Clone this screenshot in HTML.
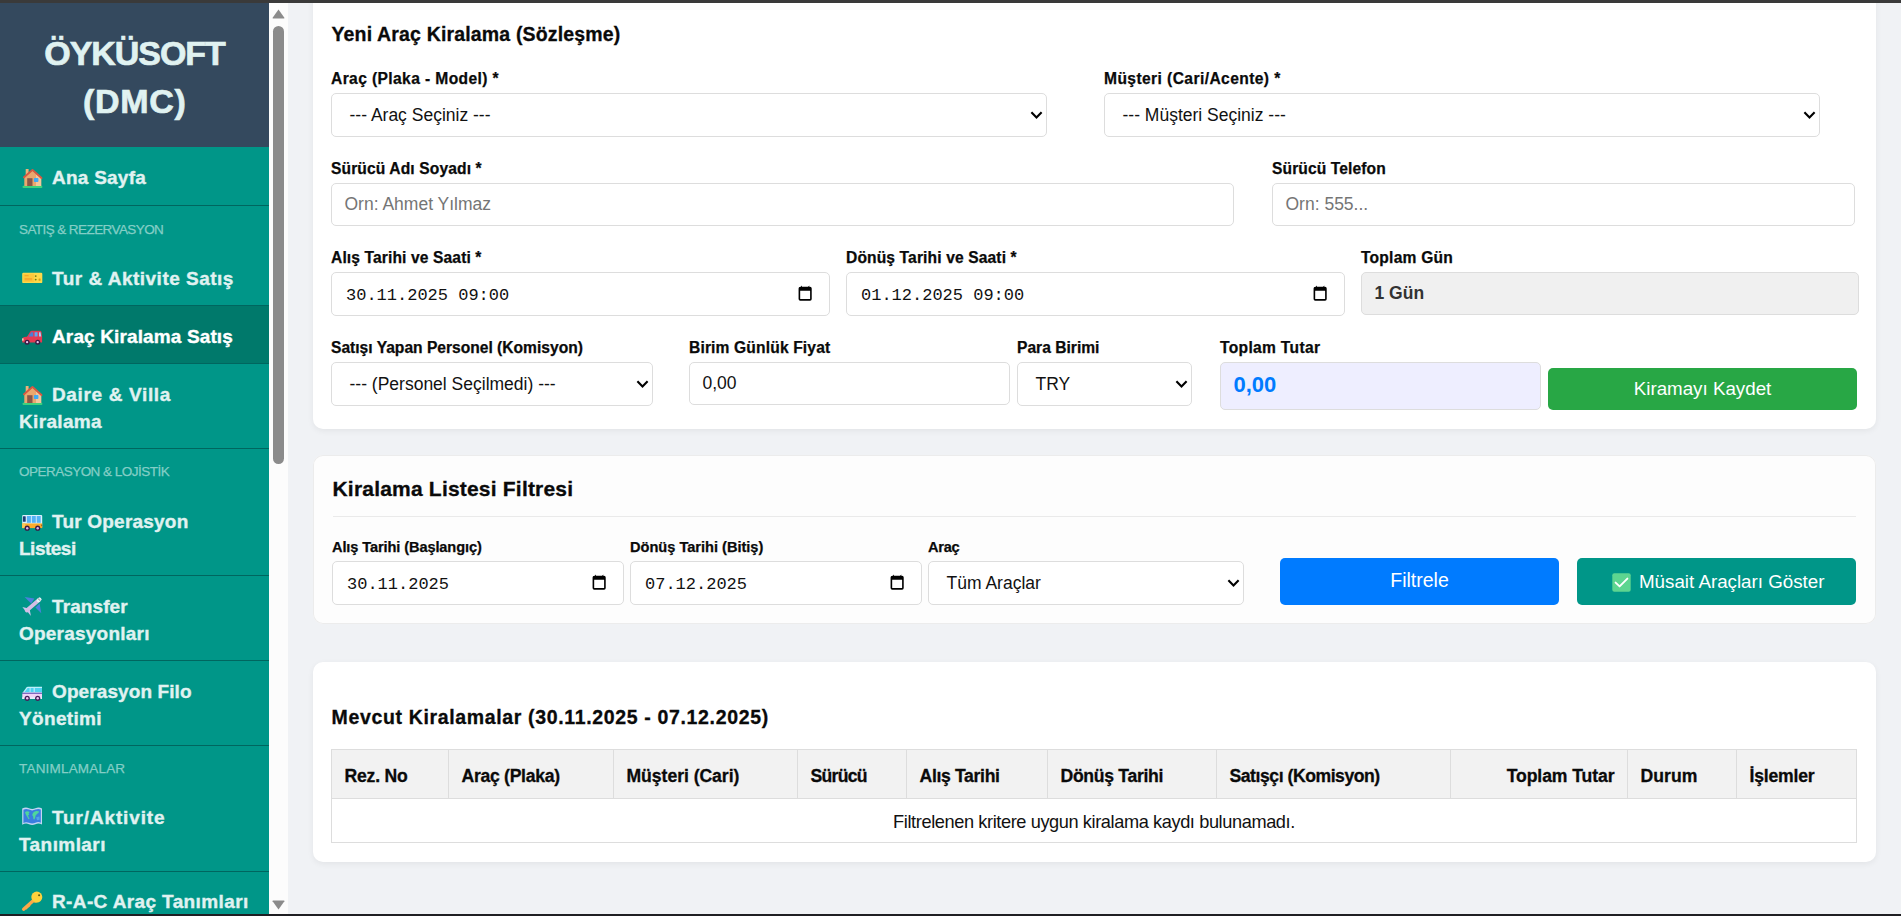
<!DOCTYPE html>
<html lang="tr">
<head>
<meta charset="utf-8">
<title>ÖYKÜSOFT (DMC) - Araç Kiralama Satış</title>
<style>
*{box-sizing:border-box}
html,body{margin:0;padding:0}
body{width:1901px;height:916px;overflow:hidden;position:relative;background:#f0f2f5;
 font-family:"Liberation Sans","DejaVu Sans",sans-serif;color:#111;font-size:18px}
.topbar{position:absolute;left:0;top:0;width:1901px;height:3px;background:#3a3a3a;z-index:20}
.botbar{position:absolute;left:0;top:914px;width:1901px;height:2px;background:#1f1f23;z-index:20}

/* ---------- sidebar ---------- */
aside{position:absolute;left:0;top:3px;width:288px;height:911px;background:#009688;overflow:hidden}
.brand{position:absolute;left:0;top:0;width:269px;height:144px;background:#34495e;color:#e0f2f1;
 text-align:center;font-weight:700;font-size:34px;line-height:47.5px;padding-top:27px;margin:0;-webkit-text-stroke:0.7px #e0f2f1}
.brand span{display:block}
nav{position:absolute;left:0;top:144px;width:269px}
nav a{display:block;height:58px;border-bottom:1px solid #00665f;padding:17px 0 0 19px;color:#e0f2f1;
 font-weight:700;font-size:19px;line-height:27px;text-decoration:none;white-space:nowrap;-webkit-text-stroke:0.35px currentColor}
nav a.first{height:59px}
nav a.two{height:85px}
nav a.active{background:#00796b;color:#fff}
nav a svg{display:inline-block;vertical-align:top;width:22px;height:24px;margin:2px 9px 0 2px}
nav a i{font-style:normal}
nav .cat{height:42px;padding:16px 0 0 19px;font-size:13.5px;line-height:16px;color:#84cec6;white-space:nowrap;-webkit-text-stroke:0.25px #84cec6}
.sb-track{position:absolute;left:269px;top:0;width:19px;height:911px;background:#fcfcfc}
.sb-thumb{position:absolute;left:4px;top:23px;width:11px;height:438px;border-radius:5.5px;background:#8b8b8b}
.sb-track svg{position:absolute;left:3px;width:13px;height:10px}

/* ---------- main ---------- */
.card{position:absolute;left:313px;width:1563px;background:#fff;border-radius:10px;
 box-shadow:0 2px 6px rgba(0,0,0,.06)}
.card h2{position:absolute;margin:0;font-weight:700;white-space:nowrap;color:#0a0a0a;-webkit-text-stroke:0.3px #0a0a0a}
.fld{position:absolute}
.fld label{position:absolute;left:0;top:0;font-weight:700;font-size:15.6px;line-height:20px;white-space:nowrap;color:#0a0a0a;-webkit-text-stroke:0.25px #0a0a0a}
.fld label.sm{font-size:14.6px}
.ctl{position:absolute;left:0;top:24px;border:1px solid #ddd;border-radius:5px;background:#fff;width:100%;
 font-size:17.5px;color:#111;white-space:nowrap;overflow:hidden}
.ctl .t{position:absolute;left:17.5px;top:0}
.ctl.ph .t,.ctl.ro .t,.ctl.val .t,.ctl.tot .t{left:12.5px}
.ctl.ph .t{color:#757575}
.ctl.ro{background:#f0f0f0;font-weight:700;color:#333}
.ctl.tot{background:#eeeeff;font-weight:700;color:#007bff;font-size:22px}
.ctl.dt .t{left:14px;font-family:"Liberation Mono","DejaVu Sans Mono",monospace;font-size:17px}
.ctl svg.chev{position:absolute;right:3.5px;top:50%;margin-top:-4px;width:13px;height:9px}
.ctl svg.cal{position:absolute;right:17px;top:50%;margin-top:-9.5px;width:14.3px;height:16.4px}
.btn{position:absolute;border-radius:5px;color:#fff;text-align:center;font-size:18.75px;white-space:nowrap}
.btn svg.chk{display:inline-block;vertical-align:top;width:19px;height:19px;margin:14.5px 8px 0 3.5px}
.hr{position:absolute;height:1px;background:#eaeaea}
table{position:absolute;border-collapse:collapse;table-layout:fixed}
th,td{border:1px solid #ddd;padding:3px 12.5px 0;white-space:nowrap}
th{padding-top:5px}
th{background:#f2f2f2;font-weight:700;font-size:17.6px;text-align:left;height:49px;color:#0a0a0a;-webkit-text-stroke:0.3px #0a0a0a}
td{height:44px;text-align:center;font-size:18.2px;color:#111;font-weight:400}
</style>
</head>
<body>
<div class="topbar"></div>

<aside>
  <h1 class="brand"><span style="letter-spacing:-1.07px">ÖYKÜSOFT</span><span style="letter-spacing:0.68px;padding-left:0.68px">(DMC)</span></h1>
  <nav>
    <a class="first"><svg viewBox="0 0 22 24"><rect x="1.5" y="19.8" width="19.9" height="2.3" rx="1" fill="#3ed17d"/><rect x="4.7" y="2.9" width="2.9" height="6.5" rx="0.5" fill="#eeb27a"/><path d="M3.3 20 L3.3 11.2 L11.5 4.6 L20.2 12 L20.2 20 Z" fill="#eaa76e"/><path d="M15 20 L15 8.5 L20.2 12.4 L20.2 20 Z" fill="#f3c79c"/><path d="M3 11.3 L11.5 3.9 L20.5 12" fill="none" stroke="#d85842" stroke-width="1.9" stroke-linecap="round" stroke-linejoin="round"/><rect x="6.2" y="12.2" width="5.3" height="7.8" fill="#8a5648"/><rect x="12.9" y="12" width="4.5" height="4.1" rx="0.8" fill="#3fa9f5"/></svg><i style="letter-spacing:0.24px">Ana Sayfa</i></a>
    <div class="cat" style="letter-spacing:-0.58px;">SATIŞ &amp; REZERVASYON</div>
    <a><svg viewBox="0 0 22 24"><rect x="1.2" y="5.8" width="20.1" height="10.3" rx="1.2" fill="#fdd94a"/><rect x="2.2" y="6.8" width="11" height="8.3" rx="0.6" fill="#fcc83c"/><rect x="3.6" y="8.3" width="4" height="0.9" fill="#f59a23"/><rect x="3.6" y="11" width="7.6" height="2.4" fill="#f8ab2e"/><circle cx="14.7" cy="9.1" r="0.95" fill="#6f7d16"/><circle cx="14.7" cy="12.6" r="0.95" fill="#6f7d16"/><rect x="17.6" y="11.4" width="2" height="2.4" rx="0.5" fill="#d9a016"/></svg><i style="letter-spacing:0.49px">Tur &amp; Aktivite Satış</i></a>
    <a class="active"><svg viewBox="0 0 22 24"><path d="M5.6 12.4 L9.3 6.6 Q9.8 5.8 10.8 5.8 L19 5.8 Q20.2 5.8 20.5 7 L21.1 12.4 Z" fill="#e23b55"/><path d="M7.3 12 L10.2 7.2 L12.2 7.2 L12.2 12 Z" fill="#4a7fd6"/><path d="M13.6 7.2 L16.6 7.2 L16.6 12 L13.6 12 Z" fill="#5aa7f3"/><path d="M18 7.2 L19.6 7.2 L20.3 12 L18 12 Z" fill="#a9d3f5"/><path d="M1.3 17.4 L1.3 14 Q1.3 12.4 3.2 12 L8 11.6 L21.1 11.6 L21.1 17.4 Z" fill="#e53a52"/><rect x="1.1" y="13.2" width="1.5" height="2.6" rx="0.6" fill="#f6d9b5"/><circle cx="6.1" cy="17.2" r="2.5" fill="#3b1a44"/><circle cx="16.7" cy="17.2" r="2.5" fill="#3b1a44"/><circle cx="6.1" cy="17.2" r="1.15" fill="#e4c6ee"/><circle cx="16.7" cy="17.2" r="1.15" fill="#e4c6ee"/></svg><i style="letter-spacing:0.13px">Araç Kiralama Satış</i></a>
    <a class="two"><svg viewBox="0 0 22 24"><rect x="1.5" y="19.8" width="19.9" height="2.3" rx="1" fill="#3ed17d"/><rect x="4.7" y="2.9" width="2.9" height="6.5" rx="0.5" fill="#eeb27a"/><path d="M3.3 20 L3.3 11.2 L11.5 4.6 L20.2 12 L20.2 20 Z" fill="#eaa76e"/><path d="M15 20 L15 8.5 L20.2 12.4 L20.2 20 Z" fill="#f3c79c"/><path d="M3 11.3 L11.5 3.9 L20.5 12" fill="none" stroke="#d85842" stroke-width="1.9" stroke-linecap="round" stroke-linejoin="round"/><rect x="6.2" y="12.2" width="5.3" height="7.8" fill="#8a5648"/><rect x="12.9" y="12" width="4.5" height="4.1" rx="0.8" fill="#3fa9f5"/></svg><i style="letter-spacing:0.65px">Daire &amp; Villa</i><br><i style="letter-spacing:0.33px">Kiralama</i></a>
    <div class="cat" style="letter-spacing:-0.52px;padding-top:14.5px">OPERASYON &amp; LOJİSTİK</div>
    <a class="two"><svg viewBox="0 0 22 24"><rect x="1.2" y="4.9" width="20" height="13.2" rx="1" fill="#d9f1fb"/><rect x="1.2" y="13.4" width="20" height="4.7" fill="#fbab2c"/><rect x="1.2" y="13.4" width="3" height="4.7" fill="#fbc95a"/><rect x="1.9" y="6.2" width="2.8" height="5.6" rx="0.6" fill="#1d3e78"/><rect x="5.9" y="6" width="4" height="6.8" fill="#54b1f4"/><rect x="10.8" y="6" width="4" height="6.8" fill="#54b1f4"/><rect x="15.7" y="6" width="4" height="6.8" fill="#54b1f4"/><rect x="20.3" y="14.6" width="0.9" height="1.6" fill="#8a4b12"/><circle cx="6.2" cy="18.2" r="2.6" fill="#3b1a44"/><circle cx="16.7" cy="18.2" r="2.6" fill="#3b1a44"/><circle cx="6.2" cy="18.2" r="1.2" fill="#dcb3ea"/><circle cx="16.7" cy="18.2" r="1.2" fill="#dcb3ea"/></svg><i style="letter-spacing:0.21px">Tur Operasyon</i><br><i style="letter-spacing:-0.5px">Listesi</i></a>
    <a class="two"><svg viewBox="0 0 22 24"><path d="M3.6 1.9 L13.4 3.4 L10.2 8.4 Z" fill="#4a80dc"/><path d="M14.4 12.4 L18.6 8.4 L20.3 18.3 Z" fill="#4a80dc"/><path d="M1.4 12 L6.6 13.2 L4.4 16 Z" fill="#cbc6ee"/><path d="M5.8 15.8 L8.6 13.8 L9.9 20.9 Z" fill="#cbc6ee"/><path d="M5.7 15.5 L18.5 4.5" fill="none" stroke="#d5bde6" stroke-width="3.7" stroke-linecap="round"/><path d="M17.5 5.35 L18.6 4.4" fill="none" stroke="#e6f5f5" stroke-width="3.7" stroke-linecap="round"/><circle cx="17.8" cy="3.9" r="0.5" fill="#4b3a55"/><circle cx="18.9" cy="4.9" r="0.5" fill="#4b3a55"/></svg><i style="letter-spacing:0.1px">Transfer</i><br><i style="letter-spacing:0.22px">Operasyonları</i></a>
    <a class="two"><svg viewBox="0 0 22 24"><path d="M1.4 13 L5.4 7.4 Q5.9 6.8 6.8 6.8 L21 6.8 L21 13 Z" fill="#bdf0fb"/><path d="M3.6 12 L6.6 8 L8.6 8 L8.6 12 Z" fill="#4fd3f2"/><rect x="9.6" y="8" width="3" height="4" fill="#4fd3f2"/><rect x="13.8" y="8" width="7.2" height="4" fill="#4fd3f2"/><rect x="1.3" y="12.6" width="19.7" height="1.5" fill="#8369c0"/><path d="M1.3 14 L21 14 L21 19 L1.3 19 Z" fill="#f0d3f6"/><rect x="1.3" y="17.2" width="19.7" height="1.8" fill="#e3eefb"/><circle cx="6.2" cy="18.3" r="2.6" fill="#47205a"/><circle cx="16.7" cy="18.3" r="2.6" fill="#47205a"/><circle cx="6.2" cy="18.3" r="1.2" fill="#efc4f2"/><circle cx="16.7" cy="18.3" r="1.2" fill="#efc4f2"/></svg><i style="letter-spacing:0.1px">Operasyon Filo</i><br><i style="letter-spacing:0.34px">Yönetimi</i></a>
    <div class="cat" style="letter-spacing:0.19px;padding-top:14.5px;height:41px">TANIMLAMALAR</div>
    <a class="two"><svg viewBox="0 0 22 24"><path d="M1.2 2.6 Q4.6 0.6 8 2.2 Q11.2 3.8 14.4 2.2 Q17.8 0.6 21 2.4 L21 18.6 Q17.8 16.6 14.4 18.2 Q11.2 19.8 8 18.2 Q4.6 16.6 1.2 18.8 Z" fill="#c3d6f3"/><path d="M2.4 3.8 Q5 2.4 8 3.6 Q11.2 5.2 14.4 3.6 Q17.4 2.4 19.8 3.6 L19.8 16.8 Q17.4 15.4 14.4 16.8 Q11.2 18.2 8 16.8 Q5 15.4 2.4 17 Z" fill="#3a7ee0"/><path d="M4 6.2 Q5.4 4.8 7.4 5.4 L8.6 6 L7.6 7.4 L8.2 8.6 L7 9.6 L7.8 11.4 L8.6 12.6 L7.6 13.2 L6.6 11.4 L5.4 9.6 L4.6 8 Z" fill="#4ed79b"/><path d="M11.4 8 Q12.4 5.6 15 5 Q17 4.8 18.2 5.6 L17.4 7 L16 8 L14.6 9.4 L14.2 11.4 L13.4 13.6 L12.4 13 L12.2 10.6 L11.4 9.6 Z" fill="#4ed79b"/><path d="M15.2 11.2 L18.4 10.6 L18.6 13.8 L16 14.2 Z" fill="#4fa3ea"/></svg><i style="letter-spacing:0.86px">Tur/Aktivite</i><br><i style="letter-spacing:0.42px">Tanımları</i></a>
    <a style="padding-top:16px"><svg viewBox="0 0 22 24"><path d="M2.6 19.2 L13 10" fill="none" stroke="#fba848" stroke-width="3.3" stroke-linecap="round"/><path d="M5.2 18.6 L6.4 17.4 M7.4 16.8 L8.6 15.6" fill="none" stroke="#fba848" stroke-width="1.6" stroke-linecap="round"/><circle cx="15.8" cy="7.1" r="5.5" fill="#fdd23c"/><path d="M11.2 10 Q13.6 12.8 17.4 12.4 Q14 13.6 11.6 11.6 Z" fill="#fbb840"/><circle cx="18.1" cy="5.2" r="1.05" fill="#5d5a10"/></svg><i style="letter-spacing:0.38px">R-A-C Araç Tanımları</i></a>
  </nav>
  <div class="sb-track">
    <svg style="top:5.7px" viewBox="0 0 13 10"><path d="M6.5 0.6 L12.4 8.8 Q12.6 9.5 12 9.5 L1 9.5 Q0.4 9.5 0.6 8.8 Z" fill="#8b8b8b"/></svg>
    <div class="sb-thumb"></div>
    <svg style="top:897px" viewBox="0 0 13 10"><path d="M6.5 9.6 L12.4 1.3 Q12.6 0.6 12 0.6 L1 0.6 Q0.4 0.6 0.6 1.3 Z" fill="#8b8b8b"/></svg>
  </div>
</aside>

<main>
<section class="card" style="top:-20px;height:449px">
  <h2 style="left:18.5px;top:42px;font-size:19.5px;line-height:24px;letter-spacing:0.16px">Yeni Araç Kiralama (Sözleşme)</h2>
  <div class="fld" style="left:18px;top:89px;width:716px">
    <label style="letter-spacing:0.39px">Araç (Plaka - Model) *</label>
    <div class="ctl sel" style="height:44px;line-height:42px"><span class="t">--- Araç Seçiniz ---</span><svg class="chev" viewBox="0 0 13 9"><path d="M1.4 1.3 L6.5 6.6 L11.6 1.3" fill="none" stroke="#000" stroke-width="2.1"/></svg></div>
  </div>
  <div class="fld" style="left:791px;top:89px;width:716px">
    <label style="letter-spacing:0.41px">Müşteri (Cari/Acente) *</label>
    <div class="ctl sel" style="height:44px;line-height:42px"><span class="t">--- Müşteri Seçiniz ---</span><svg class="chev" viewBox="0 0 13 9"><path d="M1.4 1.3 L6.5 6.6 L11.6 1.3" fill="none" stroke="#000" stroke-width="2.1"/></svg></div>
  </div>
  <div class="fld" style="left:18px;top:179px;width:903px">
    <label style="letter-spacing:0.12px">Sürücü Adı Soyadı *</label>
    <div class="ctl ph" style="height:43px;line-height:41px"><span class="t">Orn: Ahmet Yılmaz</span></div>
  </div>
  <div class="fld" style="left:959px;top:179px;width:583px">
    <label style="letter-spacing:0.11px">Sürücü Telefon</label>
    <div class="ctl ph" style="height:43px;line-height:41px"><span class="t">Orn: 555...</span></div>
  </div>
  <div class="fld" style="left:18px;top:268px;width:499px">
    <label style="letter-spacing:0.12px">Alış Tarihi ve Saati *</label>
    <div class="ctl dt" style="height:44px;line-height:45px"><span class="t">30.11.2025 09:00</span><svg class="cal" viewBox="0 0 15 17"><path d="M3.2 0.4 L4.4 1.8 L10.6 1.8 L11.8 0.4 L11.8 1.8 L12.6 1.8 Q14.4 1.8 14.4 3.6 L14.4 14.6 Q14.4 16.4 12.6 16.4 L2.4 16.4 Q0.6 16.4 0.6 14.6 L0.6 3.6 Q0.6 1.8 2.4 1.8 L3.2 1.8 Z M2.3 5.9 L2.3 14.7 L12.7 14.7 L12.7 5.9 Z" fill="#000" fill-rule="evenodd"/></svg></div>
  </div>
  <div class="fld" style="left:533px;top:268px;width:499px">
    <label style="letter-spacing:0.13px">Dönüş Tarihi ve Saati *</label>
    <div class="ctl dt" style="height:44px;line-height:45px"><span class="t">01.12.2025 09:00</span><svg class="cal" viewBox="0 0 15 17"><path d="M3.2 0.4 L4.4 1.8 L10.6 1.8 L11.8 0.4 L11.8 1.8 L12.6 1.8 Q14.4 1.8 14.4 3.6 L14.4 14.6 Q14.4 16.4 12.6 16.4 L2.4 16.4 Q0.6 16.4 0.6 14.6 L0.6 3.6 Q0.6 1.8 2.4 1.8 L3.2 1.8 Z M2.3 5.9 L2.3 14.7 L12.7 14.7 L12.7 5.9 Z" fill="#000" fill-rule="evenodd"/></svg></div>
  </div>
  <div class="fld" style="left:1048px;top:268px;width:498px">
    <label style="letter-spacing:0.22px">Toplam Gün</label>
    <div class="ctl ro" style="height:43px;line-height:40px"><span class="t">1 Gün</span></div>
  </div>
  <div class="fld" style="left:18px;top:358px;width:322px">
    <label>Satışı Yapan Personel (Komisyon)</label>
    <div class="ctl sel" style="height:44px;line-height:42px"><span class="t">--- (Personel Seçilmedi) ---</span><svg class="chev" viewBox="0 0 13 9"><path d="M1.4 1.3 L6.5 6.6 L11.6 1.3" fill="none" stroke="#000" stroke-width="2.1"/></svg></div>
  </div>
  <div class="fld" style="left:376px;top:358px;width:321px">
    <label style="letter-spacing:0.15px">Birim Günlük Fiyat</label>
    <div class="ctl val" style="height:43px;line-height:41px"><span class="t">0,00</span></div>
  </div>
  <div class="fld" style="left:704px;top:358px;width:175px">
    <label style="letter-spacing:0.01px">Para Birimi</label>
    <div class="ctl sel" style="height:44px;line-height:42px"><span class="t">TRY</span><svg class="chev" viewBox="0 0 13 9"><path d="M1.4 1.3 L6.5 6.6 L11.6 1.3" fill="none" stroke="#000" stroke-width="2.1"/></svg></div>
  </div>
  <div class="fld" style="left:907px;top:358px;width:321px">
    <label style="letter-spacing:0.32px">Toplam Tutar</label>
    <div class="ctl tot" style="height:48px;line-height:44px"><span class="t">0,00</span></div>
  </div>
  <div class="btn" style="left:1235px;top:388px;width:309px;height:42px;line-height:41px;background:#28a745">Kiramayı Kaydet</div>
</section>

<section class="card" style="top:455px;height:169px;background:#fdfdfd;box-shadow:inset 0 0 0 1px #ececec">
  <h2 style="left:19.5px;top:21px;font-size:21px;line-height:26px;letter-spacing:0.2px">Kiralama Listesi Filtresi</h2>
  <div class="hr" style="left:19.5px;top:61px;width:1523px"></div>
  <div class="fld" style="left:19px;top:82px;width:292px">
    <label class="sm" style="letter-spacing:-0.11px">Alış Tarihi (Başlangıç)</label>
    <div class="ctl dt" style="height:44px;line-height:45px"><span class="t">30.11.2025</span><svg class="cal" viewBox="0 0 15 17"><path d="M3.2 0.4 L4.4 1.8 L10.6 1.8 L11.8 0.4 L11.8 1.8 L12.6 1.8 Q14.4 1.8 14.4 3.6 L14.4 14.6 Q14.4 16.4 12.6 16.4 L2.4 16.4 Q0.6 16.4 0.6 14.6 L0.6 3.6 Q0.6 1.8 2.4 1.8 L3.2 1.8 Z M2.3 5.9 L2.3 14.7 L12.7 14.7 L12.7 5.9 Z" fill="#000" fill-rule="evenodd"/></svg></div>
  </div>
  <div class="fld" style="left:317px;top:82px;width:292px">
    <label class="sm" style="letter-spacing:-0.01px">Dönüş Tarihi (Bitiş)</label>
    <div class="ctl dt" style="height:44px;line-height:45px"><span class="t">07.12.2025</span><svg class="cal" viewBox="0 0 15 17"><path d="M3.2 0.4 L4.4 1.8 L10.6 1.8 L11.8 0.4 L11.8 1.8 L12.6 1.8 Q14.4 1.8 14.4 3.6 L14.4 14.6 Q14.4 16.4 12.6 16.4 L2.4 16.4 Q0.6 16.4 0.6 14.6 L0.6 3.6 Q0.6 1.8 2.4 1.8 L3.2 1.8 Z M2.3 5.9 L2.3 14.7 L12.7 14.7 L12.7 5.9 Z" fill="#000" fill-rule="evenodd"/></svg></div>
  </div>
  <div class="fld" style="left:615px;top:82px;width:316px">
    <label class="sm" style="letter-spacing:-0.29px">Araç</label>
    <div class="ctl sel" style="height:44px;line-height:42px"><span class="t">Tüm Araçlar</span><svg class="chev" viewBox="0 0 13 9"><path d="M1.4 1.3 L6.5 6.6 L11.6 1.3" fill="none" stroke="#000" stroke-width="2.1"/></svg></div>
  </div>
  <div class="btn" style="left:967px;top:103px;width:279px;height:47px;line-height:44px;font-size:19.5px;background:#007bff">Filtrele</div>
  <div class="btn" style="left:1264px;top:103px;width:279px;height:47px;line-height:47px;background:#009688"><svg class="chk" viewBox="0 0 19 19"><rect x="0.3" y="0.3" width="18.4" height="18.4" rx="2" fill="#5dd590"/><path d="M3.6 9.6 L7.6 13.4 L15.4 5.6" fill="none" stroke="#fff" stroke-width="1.9" stroke-linecap="round" stroke-linejoin="round"/></svg>Müsait Araçları Göster</div>
</section>

<section class="card" style="top:662px;height:200px">
  <h2 style="left:18.5px;top:43px;font-size:19.5px;line-height:24px;letter-spacing:0.65px">Mevcut Kiralamalar (30.11.2025 - 07.12.2025)</h2>
  <table style="left:18px;top:87px;width:1525px">
    <colgroup><col style="width:117px"><col style="width:165px"><col style="width:184px"><col style="width:109px"><col style="width:141px"><col style="width:169px"><col style="width:234px"><col style="width:177px"><col style="width:109px"><col style="width:120px"></colgroup>
    <thead><tr><th style="letter-spacing:-0.22px">Rez. No</th><th style="letter-spacing:-0.29px">Araç (Plaka)</th><th style="letter-spacing:-0.04px">Müşteri (Cari)</th><th style="letter-spacing:-0.73px">Sürücü</th><th style="letter-spacing:-0.33px">Alış Tarihi</th><th style="letter-spacing:-0.3px">Dönüş Tarihi</th><th style="letter-spacing:-0.45px">Satışçı (Komisyon)</th><th style="text-align:right;letter-spacing:-0.08px">Toplam Tutar</th><th style="letter-spacing:0.07px">Durum</th><th style="letter-spacing:-0.19px">İşlemler</th></tr></thead>
    <tbody><tr><td colspan="10" style="letter-spacing:-0.4px">Filtrelenen kritere uygun kiralama kaydı bulunamadı.</td></tr></tbody>
  </table>
</section>
</main>

<div class="botbar"></div>
</body>
</html>
